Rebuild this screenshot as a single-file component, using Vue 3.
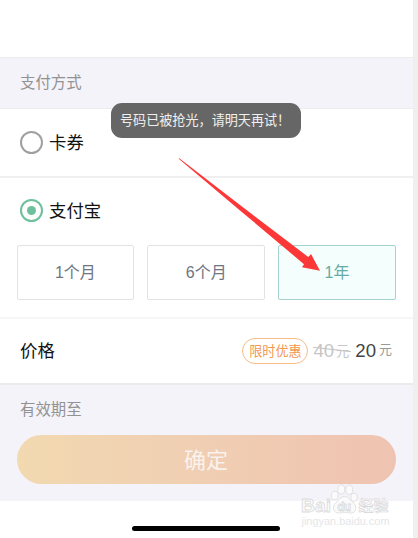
<template>
  <div class="page">
    <div class="screen">
      <div class="blank"></div>
      <div class="section-title">支付方式</div>

      <div class="pay-row" @click="payType = 'card'">
        <span class="radio" :class="{ checked: payType === 'card' }"></span>
        <span class="pay-name">卡券</span>
      </div>

      <div class="alipay">
        <div class="pay-head" @click="payType = 'alipay'">
          <span class="radio" :class="{ checked: payType === 'alipay' }"></span>
          <span class="pay-name">支付宝</span>
        </div>
        <div class="plans">
          <div
            v-for="(plan, index) in plans"
            :key="index"
            class="plan"
            :class="{ active: current === index }"
            @click="current = index"
          >
            {{ plan }}
          </div>
        </div>
      </div>

      <div class="price-row">
        <span class="price-label">价格</span>
        <span class="tag">限时优惠</span>
        <span class="old">
          <span class="old-num">40</span><span class="old-unit">元</span>
          <svg class="strike" width="40" height="8" viewBox="0 0 40 8">
            <path d="M0 1.2 L38 5.6" stroke="#c6c6c6" stroke-width="1.1" />
          </svg>
        </span>
        <span class="now">20</span>
        <span class="now-unit">元</span>
      </div>

      <div class="footer">
        <div class="expire">有效期至</div>
        <button class="submit">确定</button>
      </div>
      <div class="home"><span class="home-bar"></span></div>
    </div>

    <div class="toast">号码已被抢光，请明天再试！</div>

    <svg class="arrow" width="418" height="538" viewBox="0 0 418 538">
      <path d="M178.4 158.6 L179.6 158.6 L240 205 L308.3 257 L311 254 L320 270.8 L302 267.2 L304 264.2 L240 210.4 Z" fill="#fc3737" />
    </svg>

    <svg class="watermark" width="100" height="54" viewBox="0 0 100 54">
      <g fill="#fafafa" stroke="#dadadd" stroke-width="0.8">
        <text class="wm-logo" x="1" y="28" textLength="30" lengthAdjust="spacingAndGlyphs">Bai</text>
        <ellipse cx="34.7" cy="11.5" rx="3.4" ry="4.3" />
        <ellipse cx="41.3" cy="5.4" rx="3.5" ry="4.6" />
        <ellipse cx="49.2" cy="5.8" rx="3.5" ry="4.6" />
        <ellipse cx="54" cy="13.3" rx="3.2" ry="4.1" />
        <path d="M44.5 12.5 C49 12.5 50 16.5 53 18.5 C58 22.5 56 29.5 50.5 29 C46 28.4 43.5 28.4 39.5 29 C33 29.5 31.5 22.5 36 18.5 C39.5 16 40.5 12.5 44.5 12.5 Z" />
        <text class="wm-du" x="37.2" y="26.5" textLength="14">du</text>
      </g>
      <text class="wm-cn" x="58.5" y="26.5" textLength="30">经验</text>
      <text class="wm-url" x="1.5" y="41" textLength="88" lengthAdjust="spacingAndGlyphs">jingyan.baidu.com</text>
    </svg>
  </div>
</template>

<script setup>
import { ref } from "vue";

const payType = ref("alipay");
const plans = ["1个月", "6个月", "1年"];
const current = ref(2);
</script>

<style>
body {
  margin: 0;
  background: #efefef;
}
</style>

<style scoped>
.page {
  position: relative;
  width: 418px;
  height: 538px;
  overflow: hidden;
  background: #efefef;
  font-family: "Liberation Sans", "Noto Sans CJK SC", sans-serif;
}
.page * {
  box-sizing: border-box;
}
.screen {
  width: 413px;
  height: 538px;
  background: #fff;
}
.blank {
  height: 57px;
}
.section-title {
  height: 52px;
  line-height: 50px;
  padding-left: 20px;
  border-top: 1px solid #ececee;
  border-bottom: 1px solid #ececee;
  background: #f4f3f9;
  color: #929292;
  font-size: 15.4px;
}
.pay-row {
  display: flex;
  align-items: center;
  height: 69px;
  padding-left: 20px;
  border-bottom: 2px solid #efefef;
}
.radio {
  display: flex;
  align-items: center;
  justify-content: center;
  width: 23px;
  height: 23px;
  border: 2px solid #a0a0a0;
  border-radius: 50%;
}
.radio.checked {
  border-color: #6dc09c;
}
.radio.checked::after {
  content: "";
  width: 9px;
  height: 9px;
  border-radius: 50%;
  background: #6dc09c;
}
.pay-name {
  margin: -2px 0 0 6px;
  font-size: 17.4px;
  color: #111;
}
.alipay {
  height: 141px;
  border-bottom: 2px solid #f6f6f6;
}
.pay-head {
  display: flex;
  align-items: center;
  height: 67px;
  padding-left: 20px;
}
.pay-head .radio {
  margin-top: -2px;
}
.pay-head .pay-name {
  margin-top: -4px;
}
.plans {
  display: flex;
  gap: 13px;
  padding: 0 17px 0 16.5px;
}
.plan {
  flex: 1;
  height: 55px;
  line-height: 53px;
  text-align: center;
  border: 1px solid #e3e3e5;
  border-radius: 2px;
  color: #717582;
  font-size: 16px;
}
.plan.active {
  border-color: #a5d2ce;
  background: #f4fffd;
  color: #68aaa5;
}
.price-row {
  display: flex;
  align-items: center;
  height: 66px;
  padding: 0 21px 0 20px;
  border-bottom: 2px solid #ebebeb;
}
.price-label {
  flex: 1;
  margin-top: -3px;
  color: #111;
  font-size: 17.4px;
}
.tag {
  width: 66px;
  height: 26px;
  line-height: 25px;
  text-align: center;
  border: 1px solid #f8bd86;
  border-radius: 13px;
  color: #f2994e;
  font-size: 13.1px;
}
.old {
  position: relative;
  display: flex;
  align-items: center;
  margin-left: 5px;
  color: #c6c6c6;
}
.old-num {
  font-size: 18.6px;
}
.old-unit {
  margin: -2px 0 0 2px;
  font-size: 13.2px;
}
.strike {
  position: absolute;
  left: 0;
  top: 6px;
}
.now {
  margin-left: 6px;
  color: #444;
  font-size: 18.6px;
}
.now-unit {
  margin: -6px 0 0 3px;
  color: #999;
  font-size: 13px;
}
.footer {
  height: 116px;
  padding: 0 17px;
  background: #f4f3f9;
}
.expire {
  height: 50px;
  line-height: 50px;
  padding-left: 3px;
  color: #929292;
  font-size: 15.4px;
}
.submit {
  display: block;
  width: 379px;
  height: 49px;
  padding: 0 1px 3px 0;
  border: 0;
  border-radius: 25px;
  background: linear-gradient(90deg, #f2d9b0, #f0cfb3 45%, #efc3b1);
  color: #f9f2ee;
  font-family: inherit;
  font-size: 22px;
}
.home {
  display: flex;
  padding: 25px 0 0 132px;
}
.home-bar {
  width: 148px;
  height: 5px;
  border-radius: 3px;
  background: #000;
}
.toast {
  position: absolute;
  left: 111px;
  top: 103px;
  width: 190px;
  height: 35px;
  line-height: 35px;
  padding-left: 9px;
  border-radius: 11px;
  background: #666;
  color: #f0f0f0;
  font-size: 13.1px;
  white-space: nowrap;
}
.arrow {
  position: absolute;
  left: 0;
  top: 0;
  pointer-events: none;
}
.watermark {
  position: absolute;
  left: 300px;
  top: 484px;
}
.wm-logo {
  font-size: 19px;
  font-weight: bold;
}
.wm-du {
  font-size: 12px;
  font-weight: bold;
}
.wm-cn {
  fill: #fafafa;
  stroke: #d6d6d9;
  stroke-width: 0.6;
  font-size: 15px;
  font-weight: bold;
}
.wm-url {
  fill: #e6e6e8;
  font-size: 10px;
}
</style>
